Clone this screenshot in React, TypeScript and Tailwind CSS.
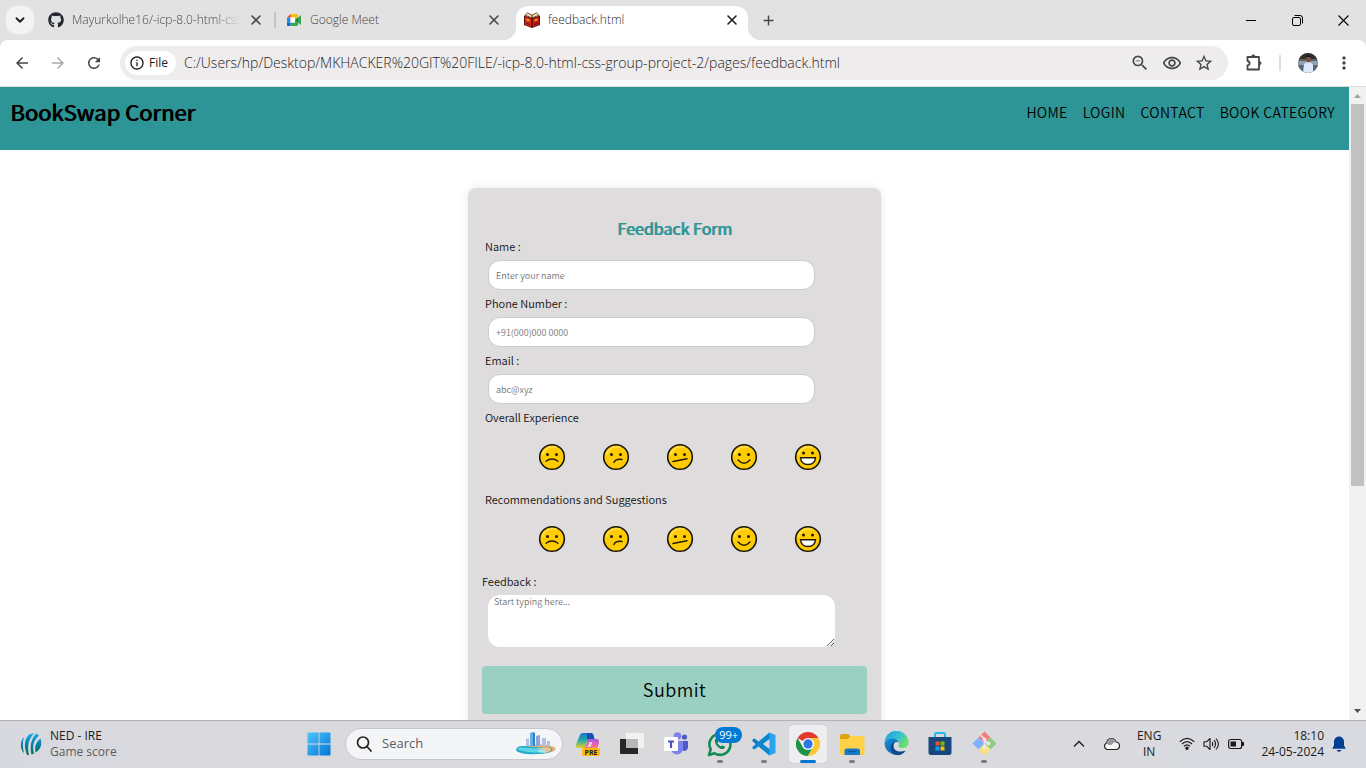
import React from "react";
import { ChevronDown, X } from "lucide-react";
import { FaGithub } from "react-icons/fa";
import {
  MdArrowBack,
  MdArrowForward,
  MdRefresh,
  MdInfoOutline,
  MdOutlineZoomOut,
  MdOutlineRemoveRedEye,
  MdStarBorder,
  MdMoreVert,
  MdAdd,
} from "react-icons/md";

const pageFont = "font-['Noto_Sans_CJK_SC',sans-serif] font-[350]";
const uiFont = "font-['Open_Sans',sans-serif]";

function MeetLogo() {
  return (
    <svg width="16" height="16" viewBox="0 0 16 16" aria-hidden="true">
      <path d="M1 5.5 4.5 2H5v3.5Z" fill="#ea4335" />
      <path d="M4.5 2H11a1 1 0 0 1 1 1v3.5L9 8V5.5H4.5Z" fill="#fbbc04" />
      <path d="M1 5.5h3.5v5H1Z" fill="#2684fc" />
      <path d="M1 10.500h3.500V14H2a1 1 0 0 1-1-1Z" fill="#0066da" />
      <path d="M4.500 10.500H9V8l3 2v3a1 1 0 0 1-1 1H4.500Z" fill="#34a853" />
      <path d="M4.500 5.500H9v5H4.500Z" fill="#fff" />
      <path d="m9 8 3-2.500v5Z" fill="#188038" />
      <path d="M12 5.500 14.500 3.300c.3-.2.500 0 .500.300v8.800c0 .300-.200.500-.500.300L12 10.500Z" fill="#34a853" />
    </svg>
  );
}

function BookLogo() {
  return (
    <svg width="16" height="16" viewBox="0 0 16 16" aria-hidden="true">
      <path d="M0 3.500 8 6l8-2.500v9.500l-8 3-8-3Z" fill="#5a0d0d" />
      <path d="M1 4.500 7.500 7v8L1 12.500Z" fill="#d8251c" />
      <path d="M8.500 7 15 4.500v8L8.500 15Z" fill="#c41a14" />
      <path d="M1 3.200 3.500.800 8 3.300 12.500.800 15 3.200 8 6Z" fill="#f1e3b5" stroke="#4a2a14" strokeWidth=".8" />
      <path d="M8 3v3" stroke="#4a2a14" />
      <path d="m2.500 6.500 3 1v2l-3-1Zm11 0-3 1v2l3-1Z" fill="#f0a21c" />
      <path d="M8 7v8.500M2 11l4 1.500m8-1.500-4 1.500" stroke="#6d0f0f" />
    </svg>
  );
}

function Avatar() {
  return (
    <svg width="20" height="20" viewBox="0 0 20 20" aria-hidden="true">
      <defs>
        <clipPath id="avatar-clip">
          <circle cx="10" cy="10" r="10" />
        </clipPath>
      </defs>
      <g clipPath="url(#avatar-clip)">
        <path d="M0 0h20v20H0z" fill="#5d625f" />
        <path d="M0 0h20v6H0z" fill="#383029" />
        <path d="M0 8h20v4H0z" fill="#8fa2b4" />
        <path d="M0 12h20v8H0z" fill="#596877" />
        <path d="M5 20 6 11l3-2h3l3 3v8Z" fill="#dce9f8" />
        <ellipse cx="10.500" cy="6" rx="2.500" ry="3.500" fill="#765044" />
        <path d="M7.500 5c0-4 6-4 6 0l-1-1h-4Z" fill="#17171a" />
      </g>
    </svg>
  );
}

type TabProps = { title: string; icon: React.ReactNode; active?: boolean; fade?: boolean };

function Tab({ title, icon, active, fade }: TabProps) {
  return (
    <div
      className={
        active
          ? "relative flex h-[34px] w-[232px] items-center gap-2 self-end rounded-t-xl bg-white px-2 pb-[6px] text-[#1f1f1f]"
          : "flex h-[34px] w-[238px] items-center gap-2 self-end pr-[14px] pb-[6px] pl-2 text-[#474747]"
      }
    >
      {active && (
        <>
          <span className="absolute bottom-0 -left-3 size-3 bg-[radial-gradient(circle_at_0_0,transparent_12px,white_12px)]" />
          <span className="absolute -right-3 bottom-0 size-3 bg-[radial-gradient(circle_at_100%_0,transparent_12px,white_12px)]" />
        </>
      )}
      <span className="shrink-0">{icon}</span>
      <span
        className={
          fade
            ? "min-w-0 flex-1 overflow-hidden text-xs whitespace-nowrap [mask-image:linear-gradient(to_right,black_85%,transparent)]"
            : "min-w-0 flex-1 overflow-hidden text-xs whitespace-nowrap"
        }
      >
        {title}
      </span>
      <button aria-label={"Close " + title} className="flex size-4 shrink-0 items-center justify-center">
        <X size={16} strokeWidth={2.4} className="shrink-0" />
      </button>
    </div>
  );
}

function TabStrip() {
  return (
    <div className="flex h-10 shrink-0 items-center bg-[#e2e2e2]">
      <button aria-label="Search tabs" className="ml-[6px] flex size-7 items-center justify-center rounded-[10px] bg-[#f3f3f3] text-[#1f1f1f]">
        <ChevronDown size={14} strokeWidth={3.2} />
      </button>
      <div className="ml-[6px] flex h-10 font-[350]">
        <Tab title="Mayurkolhe16/-icp-8.0-html-css" icon={<FaGithub size={16} color="#24292f" />} fade />
        <div className="mr-[2px] -ml-1 h-4 w-[2px] self-center bg-[#c4c4c4]" />
        <Tab title="Google Meet" icon={<MeetLogo />} />
        <Tab title="feedback.html" icon={<BookLogo />} active />
      </div>
      <button aria-label="New tab" className="ml-[10px] flex size-5 items-center justify-center text-[#474747]">
        <MdAdd size={17} />
      </button>
      <div className="ml-auto flex h-full text-black">
        <button aria-label="Minimize" className="flex w-[46px] items-center justify-center">
          <svg width="10" height="10" viewBox="0 0 10 10"><path d="M0 5.500h10" stroke="currentColor" /></svg>
        </button>
        <button aria-label="Restore" className="flex w-[46px] items-center justify-center">
          <svg width="11" height="11" viewBox="0 0 11 11" fill="none" stroke="currentColor">
            <rect x=".5" y="2.500" width="8" height="8" rx="1.500" />
            <path d="M2.500.500H8A2.500 2.500 0 0 1 10.500 3v5.500" />
          </svg>
        </button>
        <button aria-label="Close" className="flex w-[46px] items-center justify-center">
          <svg width="11" height="11" viewBox="0 0 11 11"><path d="m.5.500 10 10m0-10-10 10" stroke="currentColor" strokeWidth="1.100" /></svg>
        </button>
      </div>
    </div>
  );
}

function Toolbar() {
  return (
    <div className="bg-[#e2e2e2]">
      <div className="flex h-[47px] shrink-0 items-center rounded-t-lg border-b border-[#dedcdd] bg-white text-[#474747]">
        <div className="flex w-[120px] shrink-0 items-center gap-[18px] pl-[13px]">
          <button aria-label="Back"><MdArrowBack size={18} /></button>
          <button aria-label="Forward" className="text-[#ababab]"><MdArrowForward size={18} /></button>
          <button aria-label="Reload"><MdRefresh size={18} /></button>
        </div>
        <div className="flex h-[34px] min-w-0 flex-1 items-center rounded-full bg-[#efeced] pr-[14px] pl-[5px]">
          <button className="flex h-6 items-center gap-1 rounded-full bg-white pr-2 pl-1 text-xs font-medium text-[#1f1f1f]">
            <MdInfoOutline size={16} />
            File
          </button>
          <input
            aria-label="Address"
            className="ml-2 min-w-0 flex-1 bg-transparent text-sm font-light text-[#1f1f1f] outline-none"
            defaultValue="C:/Users/hp/Desktop/MKHACKER%20GIT%20FILE/-icp-8.0-html-css-group-project-2/pages/feedback.html"
          />
          <div className="flex items-center gap-3">
            <button aria-label="Zoom"><MdOutlineZoomOut size={20} /></button>
            <button aria-label="Tracking protection"><MdOutlineRemoveRedEye size={20} /></button>
            <button aria-label="Bookmark"><MdStarBorder size={20} /></button>
          </div>
        </div>
        <div className="flex w-[138px] shrink-0 items-center pl-4">
          <button aria-label="Extensions">
            <svg width="20" height="20" viewBox="0 0 20 20" fill="none" stroke="currentColor" strokeWidth="1.800">
              <path d="M3.500 4h11.500v12.500h-11.500v-4c2.800-.500 2.800-4 0-4.500Z" strokeLinejoin="round" />
              <path d="M7.500 3.500c0-2.200 3.500-2.200 3.500 0ZM15.500 8.500c2.200 0 2.200 3.500 0 3.500Z" fill="currentColor" strokeWidth=".6" />
            </svg>
          </button>
          <div className="ml-[15px] h-4 w-[2px] bg-[#dedcdd]" />
          <button aria-label="Profile" className="ml-[17px]"><Avatar /></button>
          <button aria-label="Menu" className="ml-[16px]"><MdMoreVert size={20} /></button>
        </div>
      </div>
    </div>
  );
}

const mouths = [
  { name: "Very bad", d: "M8 18.200Q14 13.800 20 18.200" },
  { name: "Bad", d: "M12 19.500Q13.500 15.500 20 16.500" },
  { name: "Neutral", d: "M7 18.500 21 15.800" },
  { name: "Good", d: "M8 17Q14 23.500 20 17" },
  { name: "Excellent", d: "M6.500 14.800h15Q21 21.500 14 21.500T6.500 14.800Z" },
];

function Rating({ legend, name }: { legend: string; name: string }) {
  return (
    <fieldset className="flex flex-col pb-5">
      <legend className="pl-[3px]">{legend}</legend>
      <div className="flex gap-9 pt-[18px] pl-14">
        {mouths.map((m, i) => (
          <label key={m.name} className="relative size-7 cursor-pointer">
            <input type="radio" name={name} value={i + 1} aria-label={m.name} className="sr-only" />
            <svg width="28" height="28" viewBox="0 0 28 28" fill="none">
              <circle cx="14" cy="14" r="12.300" fill="#ffcc03" stroke="#16140f" strokeWidth="1.600" />
              <path d="M5.500 20.500A11 11 0 0 0 24.500 12 11 11 0 0 1 5.500 20.500Z" fill="#f5a400" />
              <path d="M4.500 12A10.500 10.500 0 0 1 18 4.400" stroke="#ffe36b" strokeWidth="1.200" />
              <circle cx="9.500" cy={i === 4 ? 10 : 11.500} r="1.500" fill="#211b09" />
              <circle cx="18.500" cy={i === 4 ? 10 : 11.500} r="1.500" fill="#211b09" />
              <path d={m.d} stroke="#211b09" strokeWidth="1.400" strokeLinecap="round" fill={i === 4 ? "white" : "none"} />
            </svg>
          </label>
        ))}
      </div>
    </fieldset>
  );
}

const fields = [
  { id: "name", label: "Name :", hint: "Enter your name", type: "text" },
  { id: "phone", label: "Phone Number :", hint: "+91(000)000 0000", type: "tel" },
  { id: "email", label: "Email :", hint: "abc@xyz", type: "email" },
];

function FeedbackForm() {
  return (
    <form className="mx-auto mt-[38px] w-full max-w-[413px] rounded-lg bg-[#dfdcdd] px-[14px] pt-[30px] pb-4 text-[11px] leading-4 text-[#111] shadow-[0_0_8px_rgba(0,0,0,0.1)]">
      <h2 className="text-center text-base leading-5 font-normal text-[#2e9596] [text-shadow:1px_0_currentColor]">Feedback Form</h2>
      {fields.map((f) => (
        <div key={f.id} className="flex flex-col pb-[5px]">
          <label htmlFor={f.id} className="pl-[3px]">{f.label}</label>
          <input
            id={f.id}
            type={f.type}
            placeholder={f.hint}
            className="mt-[6px] ml-[6px] h-[30px] w-[327px] max-w-full rounded-xl border border-[#ccc] bg-white px-[7px] text-[9px] outline-none placeholder:text-[#757575]"
          />
        </div>
      ))}
      <Rating legend="Overall Experience" name="experience" />
      <Rating legend="Recommendations and Suggestions" name="recommend" />
      <div className="flex flex-col">
        <label htmlFor="feedback">Feedback :</label>
        <textarea
          id="feedback"
          placeholder="Start typing here..."
          className="mt-[6px] ml-[6px] h-[52px] w-[347px] max-w-full resize rounded-xl bg-white px-[6px] text-[9px] leading-[14px] outline-none placeholder:text-[#757575]"
        />
      </div>
      <button type="button" className="mt-[19px] h-12 w-full rounded bg-[#9ad0c2] pb-[2px] text-lg tracking-wide text-black">
        Submit
      </button>
    </form>
  );
}

function Page() {
  return (
    <div className={"min-w-0 flex-1 overflow-hidden bg-white " + pageFont}>
      <header className="flex h-[63px] justify-between bg-[#2e9596] px-[10px] text-black">
        <h1 className="pt-2 text-[22px] leading-8 font-normal [text-shadow:1px_0_currentColor]">BookSwap Corner</h1>
        <nav className="flex gap-[15px] pt-2 pr-1 text-sm leading-[34px] tracking-wide">
          <a href="#home">HOME</a>
          <a href="#login">LOGIN</a>
          <a href="#contact">CONTACT</a>
          <a href="#category">BOOK CATEGORY</a>
        </nav>
      </header>
      <FeedbackForm />
    </div>
  );
}

function Scrollbar() {
  return (
    <div className="flex w-[17px] shrink-0 flex-col items-center bg-[#f1f1f1]" aria-hidden="true">
      <svg width="17" height="17" viewBox="0 0 17 17" className="shrink-0"><path d="M5 11h7L8.500 7Z" fill="#a3a3a3" /></svg>
      <div className="h-[382px] w-[13px] bg-[#c1c1c1]" />
      <svg width="17" height="17" viewBox="0 0 17 17" className="mt-auto shrink-0"><path d="M5 6h7l-3.500 4Z" fill="#505050" /></svg>
    </div>
  );
}

function StartIcon() {
  return (
    <svg width="24" height="24" viewBox="0 0 24 24">
      <defs>
        <linearGradient id="start" x1="0" y1="0" x2="1" y2="1" gradientUnits="objectBoundingBox">
          <stop stopColor="#4cc6fb" /><stop offset="1" stopColor="#0474d4" />
        </linearGradient>
      </defs>
      <path d="M.500 1.500a1 1 0 0 1 1-1H11.600v11.100H.500ZM12.400.500h10.100a1 1 0 0 1 1 1v10.100H12.400ZM.500 12.400H11.600v11.100H1.500a1 1 0 0 1-1-1ZM12.400 12.400h11.100v10.100a1 1 0 0 1-1 1H12.400Z" fill="url(#start)" />
    </svg>
  );
}

function CopilotIcon() {
  return (
    <svg width="26" height="24" viewBox="0 0 26 24">
      <defs>
        <linearGradient id="cop-a" x1="0" y1="0" x2="0" y2="1"><stop stopColor="#1672d8" /><stop offset=".5" stopColor="#25b0a4" /><stop offset="1" stopColor="#e8cc24" /></linearGradient>
        <linearGradient id="cop-b" x1="0" y1="0" x2="0" y2="1"><stop stopColor="#a958e8" /><stop offset=".6" stopColor="#ee62a6" /><stop offset="1" stopColor="#f98f52" /></linearGradient>
      </defs>
      <path d="M8 1h8c1.500 0 2 1 2.500 2.500L19.500 7h-5c-2 0-2.500 2-3 4l-1.500 5H4c-3 0-3.500-2-2.500-4.500l3-7.500C5.200 2 6 1 8 1Z" fill="url(#cop-a)" />
      <path d="M12 1h4c1.500 0 2 1 2.500 2.500L19.500 7h-5c-1.500 0-2 .8-2.500 2.500Z" fill="#194fb5" />
      <path d="M14.500 7H21c3 0 3.500 2 2.800 4.500L22 17H9l2-4c1.500-3 1.500-6 3.500-6Z" fill="url(#cop-b)" />
      <path d="M14.500 10h3l-2 5h-3Z" fill="#dbdbdd" />
      <rect x="7" y="16" width="18" height="8" rx="2" fill="#fcb90d" />
      <text x="16" y="22.700" textAnchor="middle" fontSize="7" fontWeight="bold" fontFamily="Open Sans, sans-serif" fill="#222">PRE</text>
    </svg>
  );
}

function TaskViewIcon() {
  return (
    <svg width="24" height="24" viewBox="0 0 24 24">
      <path d="M0 7h18v15H1a1 1 0 0 1-1-1Z" fill="#272727" />
      <path d="M6 1h17a1 1 0 0 1 1 1v14H6Z" fill="#f2f2f2" />
      <path d="M6 7h12v9H6Z" fill="#b7b7b7" />
    </svg>
  );
}

function TeamsIcon() {
  return (
    <svg width="26" height="24" viewBox="0 0 26 24">
      <circle cx="14.500" cy="4" r="3.800" fill="#7b83eb" />
      <circle cx="21.500" cy="5" r="2.600" fill="#5059c9" />
      <path d="M18 9h7v6.500a4 4 0 0 1-7 2Z" fill="#5059c9" />
      <path d="M8 9h12v7.500a6 6 0 0 1-12 0Z" fill="#7b83eb" />
      <rect x="1" y="5" width="14" height="14" rx="1" fill="#fff" />
      <path d="M5 8.500h6v2H9.100V16H6.900v-5.500H5Z" fill="#4b53bc" />
    </svg>
  );
}

function WhatsAppIcon() {
  return (
    <svg width="26" height="26" viewBox="0 0 26 26" fill="none">
      <path d="m2 24 1.700-5.700A10.500 10.500 0 1 1 7.500 22.300Z" stroke="#168a54" strokeWidth="2.600" strokeLinejoin="round" />
      <path d="M8 9c.5-1.500 2-2 2.500-.5l.8 1.800c.2.500-.5 1.200-.8 1.600.9 1.700 2 2.700 3.700 3.500.5-.400 1-1.300 1.500-1l1.900 1c1 .5-.200 2.500-1.800 2.700C12 18.500 7 13 8 9Z" fill="#168a54" />
    </svg>
  );
}

function VsCodeIcon() {
  return (
    <svg width="24" height="24" viewBox="0 0 24 24">
      <path d="M17.500.500 7 10 2.500 6.500.500 7.500v1.800L17.500 23.500l1-5Z" fill="#1275bd" />
      <path d="M17.500 23.500 7 14l-4.500 3.500-2-1v-1.800L17.500.500l1 5Z" fill="#0d88d0" />
      <path d="m17.500.500 6 2.500v18l-6 2.500Z" fill="#2ba5ef" />
      <path d="M17.500 7v10L11 12Z" fill="#dadbe0" />
    </svg>
  );
}

function ChromeIcon() {
  return (
    <svg width="24" height="24" viewBox="0 0 24 24">
      <path d="M12 12 1.600 6A12 12 0 0 1 22.400 6Z" fill="#e33b2e" />
      <path d="M12 12 6.800 15 1.600 6A12 12 0 0 0 12 24l5.200-9Z" fill="#1e9545" />
      <path d="M12 6h10.400L12 12Z" fill="#e33b2e" />
      <path d="M22.400 6A12 12 0 0 1 12 24l5.200-9A6 6 0 0 0 12 6Z" fill="#fcc934" />
      <circle cx="12" cy="12" r="6" fill="#fff" />
      <circle cx="12" cy="12" r="4.700" fill="#3078e8" />
    </svg>
  );
}

function FolderIcon() {
  return (
    <svg width="25" height="24" viewBox="0 0 25 24">
      <path d="M0 4a2 2 0 0 1 2-2h6l3 3v5H0Z" fill="#dfa20a" />
      <path d="M0 7h8l2.500-3H23a1.500 1.500 0 0 1 1.500 1.500v16A1.500 1.500 0 0 1 23 23H1.500A1.500 1.500 0 0 1 0 21.500Z" fill="#ffd149" />
      <path d="M4.500 23v-4a2.500 2.500 0 0 1 2.500-2.500h10.500A2.500 2.500 0 0 1 20 19v4Z" fill="#157ac9" />
      <path d="M8 19.500h8.500" stroke="#0a57a0" strokeWidth="1.300" />
    </svg>
  );
}

function EdgeIcon() {
  return (
    <svg width="25" height="25" viewBox="0 0 25 25">
      <defs>
        <linearGradient id="edge-a" x1="0" y1="0" x2="1" y2=".5"><stop stopColor="#229bdd" /><stop offset=".6" stopColor="#35c1d5" /><stop offset="1" stopColor="#6ae064" /></linearGradient>
        <linearGradient id="edge-b" x1="0" y1="0" x2="1" y2="1"><stop stopColor="#168fd6" /><stop offset="1" stopColor="#124d9e" /></linearGradient>
      </defs>
      <path d="M.500 12.500A12 12 0 0 1 24.500 11c.3 4-2.500 6-6 6-3 0-5-1-4-2.500 2-3-1-6-5-6-4.500 0-7.500 2-9 4Z" fill="url(#edge-a)" />
      <path d="M.500 12.500c1.500-3 4.500-5 8-5 3 0 5.500 1.700 6.200 4C12 9.800 9 12 9.500 15.500c.5 4 5 6.800 12 4.200A12 12 0 0 1 .500 12.500Z" fill="url(#edge-b)" />
      <path d="M9 11.500C4 16 8 24 14 24.200c3.300-.2 6-2 7.500-4.500-6 2.500-11.500.5-12-4-.2-1.700 0-3 1.500-4.700Z" fill="#114a8b" />
    </svg>
  );
}

function StoreIcon() {
  return (
    <svg width="24" height="25" viewBox="0 0 24 25">
      <path d="M7 6V3.500A1.500 1.500 0 0 1 8.500 2h7A1.500 1.500 0 0 1 17 3.500V6" fill="none" stroke="#25b9e8" strokeWidth="2" />
      <path d="M.500 6h23v15.500a2.500 2.500 0 0 1-2.500 2.500H3a2.500 2.500 0 0 1-2.500-2.500Z" fill="#17477e" />
      <path d="M7.500 10.500h4v4h-4Z" fill="#f25022" /><path d="M12.500 10.500h4v4h-4Z" fill="#7fba00" />
      <path d="M7.500 15.500h4v4h-4Z" fill="#00a4ef" /><path d="M12.500 15.500h4v4h-4Z" fill="#ffb900" />
    </svg>
  );
}

function GitIcon() {
  return (
    <svg width="25" height="25" viewBox="0 0 25 25">
      <path d="m12.500.500 6 6-6 6-6-6Z" fill="#f37d7d" />
      <path d="m18.500 6.500 6 6-6 6-6-6Z" fill="#8fcb80" />
      <path d="m12.500 12.500 6 6-6 6-6-6Z" fill="#ffe07b" />
      <path d="m6.500 6.500 6 6-6 6-6-6Z" fill="#80b0ff" />
      <path d="M9 4.500 12.500 8v9M12.500 9l4 4" stroke="#e9e6e9" strokeWidth="1.700" fill="none" />
      <circle cx="12.500" cy="8.500" r="2" fill="#e9e6e9" /><circle cx="16.500" cy="12.500" r="2" fill="#e9e6e9" /><circle cx="12.500" cy="17" r="2" fill="#e9e6e9" />
    </svg>
  );
}

const apps: { name: string; icon: React.ReactNode; open?: boolean; current?: boolean; badge?: string }[] = [
  { name: "Copilot", icon: <CopilotIcon /> },
  { name: "Task view", icon: <TaskViewIcon /> },
  { name: "Teams", icon: <TeamsIcon /> },
  { name: "WhatsApp", icon: <WhatsAppIcon />, open: true, badge: "99+" },
  { name: "Visual Studio Code", icon: <VsCodeIcon />, open: true },
  { name: "Chrome", icon: <ChromeIcon />, current: true },
  { name: "File Explorer", icon: <FolderIcon />, open: true },
  { name: "Edge", icon: <EdgeIcon /> },
  { name: "Store", icon: <StoreIcon /> },
  { name: "Git", icon: <GitIcon />, open: true },
];

function CityArt() {
  return (
    <svg width="40" height="25" viewBox="0 0 40 25">
      <ellipse cx="23" cy="18" rx="16.500" ry="4.500" fill="#dfae78" />
      <path d="M10 15V8l3-1v8ZM26 15V7h4v8ZM31 15v-5h3v5Z" fill="#b4bde2" />
      <path d="M14 15V2l3-1v14Z" fill="#63b1e6" /><path d="M17 15V1l2 1v13Z" fill="#2f83bd" />
      <path d="M20 15V5l4-1v11Z" fill="#8fa6de" />
      <path d="M0 19c0-3 4-4.500 9-4 4 .5 6 1 11 1 7 0 18-1 16 3.500S2 25 0 19Z" fill="#24abc7" />
      <path d="M1 18c3-2.500 8-1.500 12-1s11 0 14 0 5 4-3 4.500S4 20 1 18Z" fill="#5fd6e8" />
      <path d="M20 17c7-1 14-1 15 1s-4 4-9 4c6-2 2-4-6-5Z" fill="#efc08b" />
      <ellipse cx="26" cy="20" rx="4" ry="1.500" fill="#a7e9f2" />
    </svg>
  );
}

function Taskbar() {
  return (
    <footer className="flex h-12 shrink-0 items-center border-t border-[#b1b1b4] bg-[linear-gradient(to_right,#d8d9df,#dadadc_45%,#d9dae0)] pb-[2px] text-[#1b1b1b]">
      <button className="flex w-[297px] shrink-0 items-center gap-2 pl-5 text-left text-xs leading-4">
        <svg width="22" height="24" viewBox="0 0 22 24">
          <defs><linearGradient id="ball" x1="0" y1="0" x2="0" y2="1"><stop stopColor="#13aeea" /><stop offset=".55" stopColor="#087ba9" /><stop offset="1" stopColor="#067048" /></linearGradient></defs>
          <path d="M3 20C0 16 0 9 4 5c-1.500 5-1.500 10 0 16ZM7 23C3.500 14 4.500 7 9 2.500L14 1C8 8 7 15 9 23ZM11.500 22.500C9.500 15 11 7 16 1.500l3 2c-6 5-7 12-5 18ZM15.500 20.500c-1-6 0-10 5-14 2 6 0 11-5 14Z" fill="url(#ball)" />
        </svg>
        <span className="flex flex-col">
          <span>NED - IRE</span>
          <span className="text-[#5b5b5f]">Game score</span>
        </span>
      </button>
      <button aria-label="Start" className="flex w-12 shrink-0 justify-start pl-[10px]"><StartIcon /></button>
      <label className="flex h-8 w-[218px] shrink-0 items-center rounded-full border border-[#c6c7cc] bg-[#f4f5f7] pr-[6px] pl-[10px]">
        <svg width="16" height="16" viewBox="0 0 16 16" fill="none" stroke="#222" strokeWidth="1.700"><circle cx="7" cy="6.500" r="5.500" /><path d="m11 10.500 4 4.500" strokeLinecap="round" /></svg>
        <input aria-label="Search" placeholder="Search" className="ml-[10px] min-w-0 flex-1 bg-transparent text-[13px] outline-none placeholder:text-[#5c5c5f]" />
        <CityArt />
      </label>
      <div className="ml-[3px] flex">
        {apps.map((a) => (
          <button
            key={a.name}
            aria-label={a.name}
            className="relative flex h-12 w-11 items-center justify-center"
          >
            <span
              className={
                a.current
                  ? "flex h-[38px] w-[38px] items-center justify-center rounded bg-[#eeeef1] shadow-[0_0_1px_rgba(0,0,0,0.3)]"
                  : "flex h-[38px] w-[38px] items-center justify-center"
              }
            >
              {a.icon}
            </span>
            {a.badge && (
              <span className="absolute top-[7px] right-0 h-4 rounded-full bg-[#0078d4] px-1 text-[11px] leading-4 text-white">{a.badge}</span>
            )}
            {a.open && <span className="absolute bottom-[5px] left-[19px] h-[3px] w-[6px] rounded-full bg-[#7c7c80]" />}
            {a.current && <span className="absolute bottom-[5px] left-[14px] h-[3px] w-4 rounded-full bg-[#0078d4]" />}
          </button>
        ))}
      </div>
      <div className="ml-auto flex items-center pr-5 text-xs leading-4">
        <button aria-label="Show hidden icons" className="mr-[18px]">
          <svg width="12" height="12" viewBox="0 0 12 12" fill="none" stroke="currentColor" strokeWidth="1.300"><path d="m1 8.500 5-5 5 5" /></svg>
        </button>
        <svg width="18" height="14" viewBox="0 0 18 14" className="mr-4">
          <path d="M4 12.500a3.500 3.500 0 0 1-.5-6.500C4 3 6 1.500 8.500 1.500c2.500 0 4 1.500 4.500 3.500a3.800 3.800 0 0 1 .5 7.500Z" fill="#f8f8f8" stroke="#222" strokeWidth="1.200" />
          <path d="M3.500 6C4 3 6 1.500 8.500 1.500c2.500 0 4 1.500 4.500 3.500-3 0-3 2.500-5 3S4 7 3.500 6Z" fill="#999" />
        </svg>
        <button className="mr-[18px] flex flex-col items-center"><span>ENG</span><span>IN</span></button>
        <div className="mr-4 flex items-center gap-2">
          <svg width="16" height="13" viewBox="0 0 16 13" fill="none" stroke="currentColor" strokeWidth="1.200">
            <path d="M.800 4.800Q8-2 15.200 4.800M3 7q5-4.800 10 0M5 9.200q3-2.800 6 0" /><circle cx="8" cy="11.200" r="1.100" fill="currentColor" />
          </svg>
          <svg width="17" height="14" viewBox="0 0 17 14" fill="none" stroke="currentColor" strokeWidth="1.100">
            <path d="M1 4.800h2.500L7 1.500v11L3.500 9.200H1ZM9 5q1.500 2 0 4M11 3.200q3 3.800 0 7.600M13 1.500q4.800 5.500 0 11" strokeLinejoin="round" />
          </svg>
          <svg width="17" height="12" viewBox="0 0 17 12" fill="none" stroke="currentColor" strokeWidth="1.200">
            <rect x=".6" y="1.500" width="13" height="9" rx="2" /><path d="M2.500 3.500H8v5H2.500Z" fill="currentColor" stroke="none" /><path d="M15 4v4" strokeWidth="2" />
          </svg>
        </div>
        <button className="mr-2 flex flex-col items-end"><span>18:10</span><span>24-05-2024</span></button>
        <button aria-label="Notifications">
          <svg width="14" height="16" viewBox="0 0 14 16" fill="#003e92"><path d="M7 .500A5 5 0 0 0 2 5.500v4L.500 12v.800h13V12L12 9.500v-4a5 5 0 0 0-5-5ZM4.700 14h4.600a2.300 1.800 0 0 1-4.600 0Z" /></svg>
        </button>
      </div>
    </footer>
  );
}

export default function App() {
  return (
    <div className={"flex h-screen flex-col overflow-hidden bg-white " + uiFont}>
      <TabStrip />
      <Toolbar />
      <main className="flex min-h-0 flex-1">
        <Page />
        <Scrollbar />
      </main>
      <Taskbar />
    </div>
  );
}
